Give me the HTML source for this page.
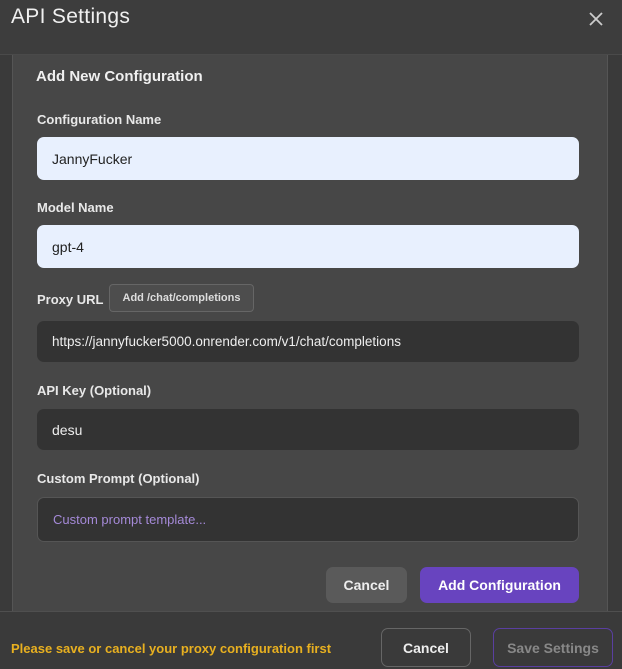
<!DOCTYPE html>
<html><head><style>
*{box-sizing:border-box;margin:0;padding:0}
body{width:622px;height:669px;background:#3a3a3a;font-family:"Liberation Sans",sans-serif;position:relative;overflow:hidden;color:#eee}
.hdr{position:absolute;left:0;top:0;width:622px;height:55px;background:#3d3d3d;border-bottom:1px solid #4a4a4a}
.hdr h1{position:absolute;left:11px;top:5px;font-size:21px;font-weight:normal;color:#f0f0f0;letter-spacing:0.3px}
.x{position:absolute;left:588px;top:11px;width:16px;height:16px}
.panel{position:absolute;left:12px;top:55px;width:596px;height:556px;background:#474747;border-left:1px solid #555;border-right:1px solid #555}
.t{position:absolute;font-size:14px;font-weight:bold;color:#f0f0f0}
.lbl{position:absolute;left:37px;font-size:13px;font-weight:bold;color:#e8e8e8}
.in{position:absolute;left:37px;width:542px;border-radius:7px;font-size:14px;padding-left:15px;display:flex;align-items:center}
.light{background:#e8f0fe;color:#222}
.dark{background:#333;color:#eee}
.btn{position:absolute;border-radius:7px;font-size:14px;font-weight:bold;display:flex;align-items:center;justify-content:center}
.foot{position:absolute;left:0;top:611px;width:622px;height:58px;background:#3a3a3a;border-top:1px solid #4f4f4f}
</style></head><body>
<div class="hdr"><h1>API Settings</h1>
<svg class="x" viewBox="0 0 16 16"><path d="M2 2L14 14M14 2L2 14" stroke="#ccc" stroke-width="1.8"/></svg></div>
<div class="panel"></div>
<div class="t" style="left:36px;top:68px;font-size:15px">Add New Configuration</div>
<div class="lbl" style="top:112px">Configuration Name</div>
<div class="in light" style="top:137px;height:43px">JannyFucker</div>
<div class="lbl" style="top:200px">Model Name</div>
<div class="in light" style="top:225px;height:43px">gpt-4</div>
<div class="lbl" style="top:292px">Proxy URL</div>
<div class="btn" style="left:109px;top:284px;width:145px;height:28px;border:1px solid #666;background:#4d4d4d;font-size:11px;border-radius:4px;color:#ddd">Add /chat/completions</div>
<div class="in dark" style="top:321px;height:41px;font-size:13.5px">https://jannyfucker5000.onrender.com/v1/chat/completions</div>
<div class="lbl" style="top:383px">API Key (Optional)</div>
<div class="in dark" style="top:409px;height:41px">desu</div>
<div class="lbl" style="top:471px">Custom Prompt (Optional)</div>
<div class="in dark" style="top:497px;height:45px;border:1px solid #555;color:#a58ad8;font-size:13px">Custom prompt template...</div>
<div class="btn" style="left:326px;top:567px;width:81px;height:36px;background:#5a5a5a;color:#eee">Cancel</div>
<div class="btn" style="left:420px;top:567px;width:159px;height:36px;background:#6844bf;color:#fff">Add Configuration</div>
<div class="foot"></div>
<div style="position:absolute;left:11px;top:641px;font-size:13px;font-weight:bold;color:#e8b020">Please save or cancel your proxy configuration first</div>
<div class="btn" style="left:381px;top:628px;width:90px;height:39px;border:1px solid #666;color:#eee">Cancel</div>
<div class="btn" style="left:493px;top:628px;width:120px;height:39px;border:1px solid #5a3fa0;color:#888">Save Settings</div>
</body></html>
